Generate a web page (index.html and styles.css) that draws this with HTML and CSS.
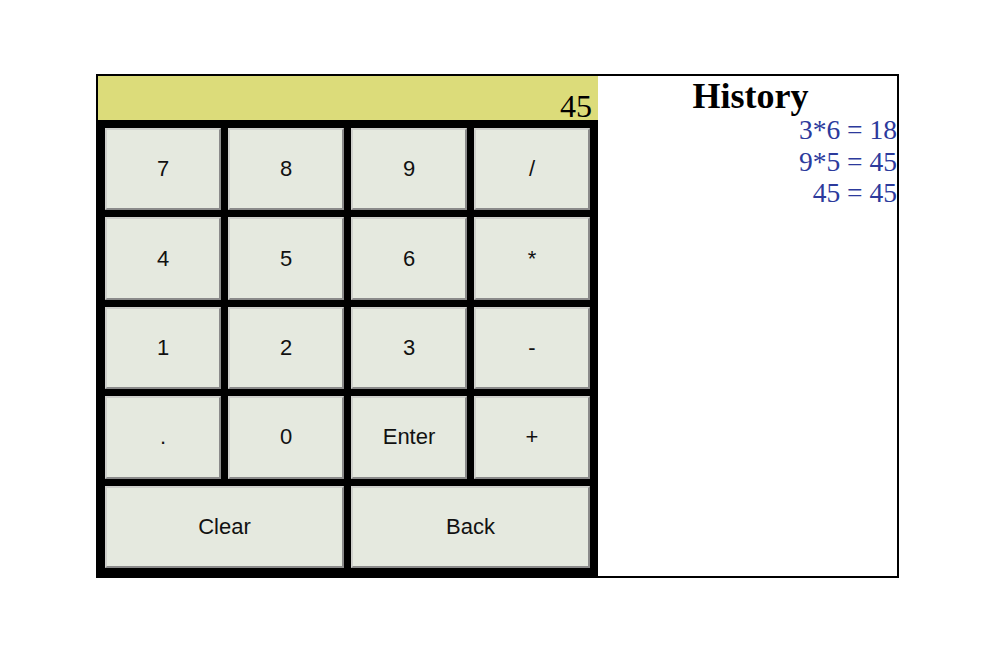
FILE: index.html
```html
<!DOCTYPE html>
<html>
<head>
<meta charset="utf-8">
<link rel="stylesheet" href="styles.css">
</head>
<body>
<div class="app">
  <div class="calc">
    <div class="display">45</div>
    <div class="keys">
      <button class="key">7</button>
      <button class="key">8</button>
      <button class="key">9</button>
      <button class="key">/</button>
      <button class="key">4</button>
      <button class="key">5</button>
      <button class="key">6</button>
      <button class="key">*</button>
      <button class="key">1</button>
      <button class="key">2</button>
      <button class="key">3</button>
      <button class="key">-</button>
      <button class="key">.</button>
      <button class="key">0</button>
      <button class="key">Enter</button>
      <button class="key">+</button>
      <button class="key wide">Clear</button>
      <button class="key wide">Back</button>
    </div>
  </div>
  <div class="history">
    <h2 class="history-title">History</h2>
    <div class="entry">3*6 = 18</div>
    <div class="entry">9*5 = 45</div>
    <div class="entry">45 = 45</div>
  </div>
</div>
</body>
</html>
```

FILE: styles.css
```css
html, body {
  margin: 0;
  padding: 0;
  background: #ffffff;
}
body {
  padding: 74px 0 0 96px;
  font-family: "Liberation Serif", "Times New Roman", serif;
}
.app {
  display: flex;
  width: 799px;
  height: 500px;
  border: 2px solid #000;
}
.calc {
  width: 500px;
  display: flex;
  flex-direction: column;
  background: #000;
}
.display {
  height: 44px;
  box-sizing: border-box;
  background: #dcdc7a;
  text-align: right;
  font-size: 32px;
  line-height: 37px;
  padding: 12px 6px 0 0;
  color: #000;
  overflow: visible;
}
.keys {
  flex: 1;
  display: grid;
  grid-template-columns: repeat(4, 116px);
  grid-template-rows: repeat(5, 1fr);
  gap: 7px;
  padding: 8px 8px 8px 7px;
}
.key {
  margin: 0;
  padding: 0;
  background: #e5e9df;
  border: 2px solid;
  border-color: #cfd0cc #8a8a8a #8a8a8a #cfd0cc;
  font-family: "Liberation Sans", Arial, sans-serif;
  font-size: 22px;
  color: #111;
}
.key.wide {
  grid-column: span 2;
}
.history {
  flex: 1;
  display: flex;
  flex-direction: column;
}
.history-title {
  margin: 0;
  padding: 3px 0 0 6px;
  text-align: center;
  font-size: 36px;
  font-weight: bold;
  line-height: 35px;
  color: #000;
}
.entry {
  text-align: right;
  font-size: 27.5px;
  line-height: 31.5px;
  color: #2c3a9c;
}
```
